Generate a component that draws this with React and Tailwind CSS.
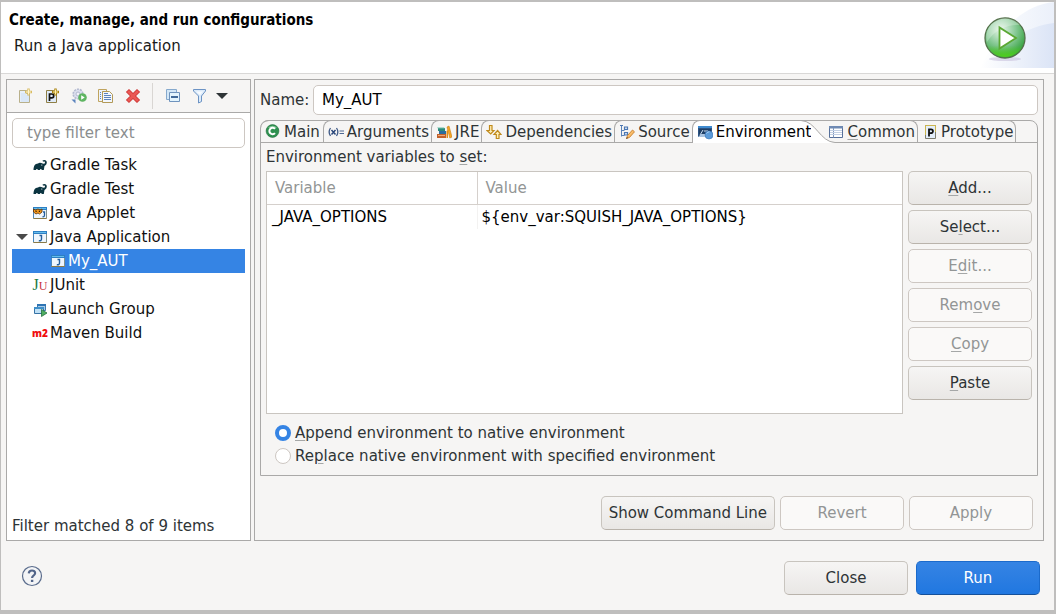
import React, { useState } from "react";

const Svg = ({ size = 16, box = 16, children, className = "" }) => (
    <svg width={size} height={size} viewBox={`0 0 ${box} ${box}`} className={`shrink-0 ${className}`} aria-hidden="true">
        {children}
    </svg>
);

/* ---------- toolbar icons ---------- */

const NewIcon = () => (
    <Svg>
        <path d="M2.5 2.5h7v3h3v9h-10z" fill="#e6effa" stroke="#b9b08a" />
        <path d="M4 5h5v2h3v7H4z" fill="#d9e7f8" />
        <path d="M11.5 .5v7M8 4h7" stroke="#d8bb62" strokeWidth="2.4" />
        <path d="M11.5 1.5v5M9 4h5" stroke="#fff6cf" />
    </Svg>
);

const NewPrototypeIcon = () => (
    <Svg>
        <path d="M2.5 2.5h7v3h3v9h-10z" fill="#dfeaf8" stroke="#8f7f45" />
        <path d="M5.5 13V6h2.300a1.900 1.900 0 0 1 0 3.800H5.500" fill="none" stroke="#111" strokeWidth="1.7" />
        <path d="M11.5 .5v7M8 4h7" stroke="#a67f0c" strokeWidth="2.4" />
        <path d="M11.5 1.5v5M9 4h5" stroke="#fff0a8" />
    </Svg>
);

const ExportIcon = () => (
    <Svg>
        <circle cx="7" cy="6" r="4.800" fill="#dcdfee" stroke="#b3b9cf" strokeWidth="1.6" strokeDasharray="2 1" />
        <circle cx="7" cy="6" r="2" fill="#f1f2f8" stroke="#b3b9cf" />
        <path d="M.5 11.500h4v4L3 14z" fill="#5b84bd" />
        <circle cx="11.500" cy="9.500" r="4.300" fill="#5fb562" />
        <path d="M10.200 7.300v4.400l3.500-2.200z" fill="#fff" />
    </Svg>
);

const DuplicateIcon = () => (
    <Svg>
        <path d="M.5 1.500h8v2h-4v10h-4z" fill="#eef3fb" stroke="#c0a45e" />
        <path d="M4.500 3.500h7l3 3v8h-10z" fill="#f3f7fd" stroke="#b39a58" />
        <path d="M2 4.500h1M2 6.500h1M2 8.500h1M2 10.500h1M6 5.500h4M6 7.500h7M6 9.500h7M6 11.500h7" stroke="#5d83bd" />
    </Svg>
);

const DeleteIcon = () => (
    <Svg>
        <path d="M4 4l8 8M12 4l-8 8" stroke="#c9302e" strokeWidth="4.400" strokeLinecap="square" />
        <path d="M4 4l8 8M12 4l-8 8" stroke="#ea5854" strokeWidth="3" strokeLinecap="square" />
    </Svg>
);

const CollapseIcon = () => (
    <Svg>
        <path d="M1.500 1.500h10v10h-10z" fill="#d3e7f7" stroke="#86a9cd" />
        <path d="M4.500 4.500h10v9h-10z" fill="#e3f4fd" stroke="#6f93bd" />
        <path d="M6 9h7" stroke="#0d3d78" strokeWidth="1.500" />
    </Svg>
);

const FilterIcon = () => (
    <Svg>
        <path d="M1.500 1.500h12v1.500L9.500 8v5.500l-3 1.500V8l-5-5z" fill="#dcebfa" stroke="#6c93c4" />
        <path d="M4 3.500h7L8 7z" fill="#f7fbff" />
    </Svg>
);

/* ---------- tree icons ---------- */

const GradleIcon = () => (
    <Svg>
        <path
            d="M1.500 13c0-4 1.500-6.500 4.500-6.600 1.300-.9 3.300-.6 4.600.2 1.600.5 2.700-.3 2.300-1.700-.3-.7-1.200-.6-1.700-.1l-.8-1c1.400-1.500 4.100-1 4.400 1.200.2 2-1 3.200-2.300 4L11.800 13h-2c-.2-1.500-1.700-1.500-2 0H5.900c-.2-1.500-1.700-1.500-2 0z"
            fill="#0b3440"
        />
        <circle cx="9.800" cy="8" r=".6" fill="#fff" />
    </Svg>
);

const WindowFrame = () => (
    <>
        <path d="M1.500 2.500h13v11h-13z" fill="#eef6fd" stroke="#8a7a48" />
        <path d="M1.500 13V5" stroke="#4b86bb" />
        <path d="M14.500 13V5" stroke="#7f8f8c" />
        <path d="M1 2h14v3H1z" fill="#2c7fc4" />
        <path d="M2 3h12v1H2z" fill="#65bdeb" />
    </>
);

const JavaAppIcon = () => (
    <Svg>
        <WindowFrame />
        <path d="M7.500 6.500h2V10c0 1.600-1.100 2-2.700 1.700" fill="none" stroke="#245f9e" strokeWidth="1.400" />
    </Svg>
);

const JavaAppletIcon = () => (
    <Svg>
        <WindowFrame />
        <path d="M11 7h1.500v3c0 1.500-.8 2-2 1.700" fill="none" stroke="#245f9e" strokeWidth="1.300" />
        <path d="M1.500 4l2 1L6 4l2 1 2-1v3L7.500 9 6 8 4 9 1.500 7z" fill="#f39a1e" stroke="#5a3009" strokeWidth=".8" />
        <path d="M3.500 6.300h1.200M6.800 6.300H8" stroke="#3b1d00" strokeWidth="1.200" />
    </Svg>
);

const JUnitIcon = () => (
    <span aria-hidden="true" className="flex w-4 shrink-0 items-baseline justify-center font-['Liberation_Serif',serif] leading-4">
        <span className="text-[16px] text-[#1c7a45]">J</span>
        <span className="text-[12px] text-[#c8343f]">U</span>
    </span>
);

const LaunchGroupIcon = () => (
    <Svg>
        <path d="M5.500 3.500h8v6h-8z" fill="#a9cdea" stroke="#3d78ab" />
        <path d="M5 3h9v2H5z" fill="#2f74b3" />
        <path d="M2.500 6.500h9v6h-9z" fill="#bfe0f6" stroke="#3572a5" />
        <path d="M2 6h10v2H2z" fill="#3f8fc9" />
        <path d="M9.500 8.500v7l5.500-3.500z" fill="#4fae62" stroke="#27713f" strokeWidth=".8" />
    </Svg>
);

const MavenIcon = () => (
    <span aria-hidden="true" className="w-4 shrink-0 text-center font-['Open_Sans',sans-serif] text-[10px] leading-4 font-extrabold text-[#f00d0d]">
        m2
    </span>
);

/* ---------- tab icons ---------- */

const ClassIcon = () => (
    <Svg>
        <circle cx="7.500" cy="7" r="6.400" fill="#2f9150" stroke="#1f6f3b" strokeWidth=".6" />
        <path d="M3 4a5.500 5.500 0 0 1 9 0z" fill="#7ac290" />
        <path d="M10 4.900a3.200 3.200 0 1 0 0 4.200" fill="none" stroke="#fff" strokeWidth="2" />
    </Svg>
);

const ArgumentsIcon = () => (
    <Svg>
        <path d="M2.500 4c-1.700 2.500-1.700 5.500 0 8M8.500 4c1.700 2.500 1.700 5.500 0 8" fill="none" stroke="#3f5a86" strokeWidth="1.300" />
        <path d="M3.500 6l4 4.500M7.500 6l-4 4.500" stroke="#2a477a" strokeWidth="1.500" />
        <path d="M11.500 7h4.500M11.500 9.500h4.500" stroke="#4d6893" strokeWidth="1.200" />
    </Svg>
);

const LibraryIcon = () => (
    <Svg>
        <path d="M2 4h7v3H2z" fill="#2c8a7b" />
        <path d="M1 3.500h7l1 1H2z" fill="#6dc0a8" />
        <path d="M3 7h7v3H3z" fill="#2b6d9e" />
        <path d="M1 10h9v4H1z" fill="#c2602b" />
        <path d="M2 11h7v1H2z" fill="#efab77" />
        <path d="M11 3l2-1 3 11-2.200 1z" fill="#f5a623" stroke="#c97b10" strokeWidth=".6" />
        <path d="M10.500 14V7l1.500-1v8z" fill="#e08d17" />
    </Svg>
);

const DependenciesIcon = () => (
    <Svg>
        <path d="M3.500 1.500h2.500v5h2L4.700 10 1 6.500h2.500z" fill="#fff0b8" stroke="#c08a1c" strokeWidth="1.200" />
        <path d="M10.300 14.500h2.700v-4h2L11.600 6.500 8 10.500h2.300z" fill="#fff0b8" stroke="#c08a1c" strokeWidth="1.200" />
    </Svg>
);

const SourceIcon = () => (
    <Svg>
        <path d="M2.500 2v10.500M2.500 6.500h3M2.500 11.500h3" fill="none" stroke="#5c83b8" />
        <path d="M1 1.500h3M5.500 3h3v2.500h-3zM5.500 8.500h3V11h-3z" fill="#d7e5f6" stroke="#4c77b2" strokeWidth="1.200" />
        <path d="M7.500 14.500l1-3L13.500 6l2 1.800-5 5.600z" fill="#f9bd6a" stroke="#c77e2c" strokeWidth=".9" />
        <path d="M7 15l1-2 1 1z" fill="#5c4327" />
    </Svg>
);

const EnvironmentIcon = () => (
    <Svg>
        <path d="M1 2h14v11H1z" fill="#2d5483" />
        <path d="M1 2h14v2H1z" fill="#3f8bd0" />
        <path d="M2 5h12v7H2z" fill="#1f3f66" />
        <path d="M3 11l3-5M7 7h4" stroke="#c9dcf0" />
        <path d="M1 13l3-3h6v3z" fill="#a9c3e0" />
        <circle cx="12" cy="11" r="4" fill="#5b9ad8" stroke="#3a76b6" strokeWidth=".6" />
        <path d="M9.500 9.500a3.500 3.500 0 0 1 3-1.800" fill="none" stroke="#aed2f5" />
    </Svg>
);

const CommonIcon = () => (
    <Svg>
        <path d="M1.500 2.500h13v11h-13z" fill="#fff" stroke="#57709a" />
        <path d="M1 2h14v2.500H1z" fill="#6f8ab3" />
        <path d="M5.500 4v9.500" stroke="#7f97bd" />
        <path d="M2 6.500h12M2 8.500h12M2 10.500h12" stroke="#c3d0e4" />
    </Svg>
);

const PrototypeIcon = () => (
    <Svg>
        <path d="M3.500 1.500h10v13h-10z" fill="#e4eefa" stroke="#7d7d6f" />
        <path d="M3.500 11V1.500h10V8" fill="none" stroke="#cdb64e" />
        <path d="M7 12.500V5.300h2a1.900 1.900 0 0 1 0 3.900H7" fill="none" stroke="#111" strokeWidth="1.800" />
    </Svg>
);

const RunBadge = () => (
    <svg width="46" height="46" viewBox="0 0 46 46" className="shrink-0" aria-hidden="true">
        <defs>
            <radialGradient id="ball" cx=".4" cy=".3" r=".75">
                <stop offset="0" stopColor="#e8f5ea" />
                <stop offset=".5" stopColor="#86c995" />
                <stop offset=".85" stopColor="#43a84e" />
                <stop offset="1" stopColor="#2f9a2f" />
            </radialGradient>
            <linearGradient id="glow" x1="0" y1="0" x2="0" y2="1">
                <stop offset=".7" stopColor="#4fd11c" stopOpacity="0" />
                <stop offset="1" stopColor="#4fd11c" />
            </linearGradient>
        </defs>
        <ellipse cx="23" cy="43" rx="16" ry="2" fill="#c9c3dd" opacity=".6" />
        <circle cx="23" cy="22" r="20" fill="url(#ball)" stroke="#53704a" strokeWidth="1.300" />
        <circle cx="23" cy="22" r="19" fill="url(#glow)" />
        <path d="M5 26C12 14 26 8 38 9a19 19 0 0 0-33 17z" fill="#fff" opacity=".25" />
        <path d="M17.500 11.500v21L34 22z" fill="#fff" stroke="#5aa833" strokeWidth="1.800" />
    </svg>
);

const HeaderSwoosh = () => (
    <svg width="74" height="66" viewBox="0 0 74 66" className="absolute top-0 right-0" aria-hidden="true">
        <defs>
            <linearGradient id="sky" x1="0" y1="0" x2="1" y2="0">
                <stop offset="0" stopColor="#fff" />
                <stop offset="1" stopColor="#dbe4f6" />
            </linearGradient>
        </defs>
        <path d="M0 66C18 30 40 4 74 0v66z" fill="url(#sky)" opacity=".55" />
        <path d="M0 66C22 42 46 24 74 21v45z" fill="url(#sky)" />
    </svg>
);

const Caret = ({ color }) => (
    <svg width="12" height="6" viewBox="0 0 12 6" className="shrink-0" aria-hidden="true">
        <path d="M0 0h12L6 6z" fill={color} />
    </svg>
);

/* ---------- data ---------- */

const toolbar = [
    { label: "New launch configuration", Icon: NewIcon },
    { label: "New launch configuration prototype", Icon: NewPrototypeIcon },
    { label: "Export launch configuration", Icon: ExportIcon },
    { label: "Duplicate", Icon: DuplicateIcon },
    { label: "Delete", Icon: DeleteIcon },
];

const tree = [
    { label: "Gradle Task", Icon: GradleIcon },
    { label: "Gradle Test", Icon: GradleIcon },
    { label: "Java Applet", Icon: JavaAppletIcon },
    { label: "Java Application", Icon: JavaAppIcon, open: true },
    { label: "My_AUT", Icon: JavaAppIcon, child: true },
    { label: "JUnit", Icon: JUnitIcon },
    { label: "Launch Group", Icon: LaunchGroupIcon },
    { label: "Maven Build", Icon: MavenIcon },
];

// mnemonic is the index of the underlined letter
const tabs = [
    { label: "Main", Icon: ClassIcon, side: "border-t border-r border-r-transparent rounded-tl-lg" },
    { label: "Arguments", Icon: ArgumentsIcon, side: "border-t border-l rounded-tl-lg" },
    { label: "JRE", Icon: LibraryIcon, side: "border-t border-l rounded-tl-lg" },
    { label: "Dependencies", Icon: DependenciesIcon, side: "border-t border-l rounded-tl-lg" },
    { label: "Source", Icon: SourceIcon, side: "border-t border-l rounded-tl-lg" },
    { label: "Environment", Icon: EnvironmentIcon, side: "border-t border-l rounded-tl-lg", active: true },
    { label: "Common", Icon: CommonIcon, side: "border-t border-r rounded-tr-lg", mnemonic: 0 },
    { label: "Prototype", Icon: PrototypeIcon, side: "border-t border-r rounded-tr-lg" },
];

const actions = [
    { label: "Add...", mnemonic: 0 },
    { label: "Select...", mnemonic: 2 },
    { label: "Edit...", mnemonic: 1, disabled: true },
    { label: "Remove", mnemonic: 3, disabled: true },
    { label: "Copy", mnemonic: 0, disabled: true },
    { label: "Paste", mnemonic: 0 },
];

const Mnemonic = ({ text, at }) => {
    if (at === undefined) return <span>{text}</span>;
    return (
        <span>
            {text.slice(0, at)}
            <u className="decoration-[#a5a7a7] underline-offset-2">{text[at]}</u>
            {text.slice(at + 1)}
        </span>
    );
};

const Button = ({ children, primary, disabled, className = "w-[124px]" }) => {
    let look = "border-[#c8c4be] border-b-[#b9b3ab] bg-linear-to-b from-[#f6f5f4] to-[#e9e7e5] text-[#2e3436]";
    if (primary) look = "border-[#1b6acb] border-b-[#155099] bg-linear-to-b from-[#3584e4] to-[#2077e0] text-white";
    if (disabled) look = "border-[#cdc7c2] bg-[#faf9f8] text-[#929595]";
    return (
        <button type="button" disabled={disabled} className={`h-[34px] rounded-[5px] border whitespace-nowrap ${look} ${className}`}>
            {children}
        </button>
    );
};

const Sidebar = () => (
    <aside className="flex w-[245px] shrink-0 flex-col border border-[#aaa9a8] bg-white">
        <div className="flex h-[33px] items-center border-b border-[#aaa9a8] bg-[#f6f5f4] pl-[10px]">
            <div className="flex gap-[11px]">
                {toolbar.map(({ label, Icon }) => (
                    <button key={label} type="button" aria-label={label}>
                        <Icon />
                    </button>
                ))}
            </div>
            <span className="mr-3 ml-[11px] h-[26px] w-px bg-[#d9d6d3]" />
            <button type="button" aria-label="Collapse all">
                <CollapseIcon />
            </button>
            <button type="button" aria-label="Filter launch configurations" className="ml-[11px] flex items-center gap-2">
                <FilterIcon />
                <Caret color="#2e3436" />
            </button>
        </div>

        <div className="flex flex-1 flex-col px-[5px] pt-[5px] pb-1">
            <input
                type="text"
                aria-label="Filter"
                placeholder="type filter text"
                className="h-[30px] w-full rounded-[5px] border border-[#cdc7c2] bg-white px-[14px] placeholder:text-[#8b8e8f]"
            />
            <ul role="tree" className="mt-[5px] flex-1 text-[#101010]">
                {tree.map(({ label, Icon, open, child }) => (
                    <li
                        key={label}
                        role="treeitem"
                        aria-selected={!!child}
                        className={`flex h-6 items-center gap-[2px] ${child ? "bg-[#3584e4] pl-[38px] text-white" : open ? "pl-1" : "pl-5"}`}
                    >
                        {open && (
                            <span className="w-[14px]">
                                <Caret color="#4a4a4a" />
                            </span>
                        )}
                        <Icon />
                        <span>{label}</span>
                    </li>
                ))}
            </ul>
            <p className="leading-5">Filter matched 8 of 9 items</p>
        </div>
    </aside>
);

const TabBar = () => (
    <div role="tablist" className="flex h-[22px] border-b border-[#aaa9a8]">
        {tabs.map(({ label, Icon, side, active, mnemonic }) => (
            <button
                key={label}
                type="button"
                role="tab"
                aria-selected={!!active}
                className={`relative -mt-px flex h-[22px] items-center gap-[3px] border-[#aaa9a8] ${side} ${
                    active ? "-mb-px h-[23px] bg-white pr-0 pl-1 text-black" : "pr-[2px] pl-1"
                } ${label === "Common" ? "ml-[13px]" : ""}`}
            >
                <Icon />
                <Mnemonic text={label} at={mnemonic} />
                {active && (
                    <svg width="34" height="23" viewBox="0 0 34 23" className="absolute -top-px left-full -ml-[10px]" aria-hidden="true">
                        <path d="M0 0h34v23C20 22 14 2 0 1z" fill="#f6f5f4" />
                        <path d="M10 4C16 9 21 21 34 23H10z" fill="#fff" />
                        <path d="M0 .5h34" stroke="#aaa9a8" />
                        <path d="M0 .5C15 1 19 22 34 22.500" fill="none" stroke="#aaa9a8" />
                    </svg>
                )}
            </button>
        ))}
    </div>
);

const EnvironmentTab = () => {
    const [mode, setMode] = useState("append");

    return (
        <div className="flex flex-1 flex-col px-[5px] pb-2">
            <p className="pt-1 pb-1 leading-5">
                <Mnemonic text="Environment variables to set:" at={25} />
            </p>
            <div className="flex flex-1 gap-[5px]">
                <div className="flex-1 border border-[#c9c5c0] bg-white">
                    <table className="w-full table-fixed border-collapse text-left">
                        <thead>
                            <tr className="h-8 border-b border-[#d5d0cc] text-[#929595]">
                                <th className="w-[210px] border-r border-[#d5d0cc] px-2 font-normal">Variable</th>
                                <th className="px-2 font-normal">Value</th>
                            </tr>
                        </thead>
                        <tbody className="text-black">
                            <tr className="h-6">
                                <td className="border-r border-[#f3f2f1] pl-[5px]">_JAVA_OPTIONS</td>
                                <td className="pl-1">{"${env_var:SQUISH_JAVA_OPTIONS}"}</td>
                            </tr>
                        </tbody>
                    </table>
                </div>
                <div className="flex flex-col gap-[5px]">
                    {actions.map(({ label, mnemonic, disabled }) => (
                        <Button key={label} disabled={disabled}>
                            <Mnemonic text={label} at={mnemonic} />
                        </Button>
                    ))}
                </div>
            </div>

            <div className="mt-[7px] flex flex-col pl-[9px]">
                {[
                    { id: "append", label: "Append environment to native environment", at: 0 },
                    { id: "replace", label: "Replace native environment with specified environment", at: 2 },
                ].map((option) => (
                    <label key={option.id} className="flex h-[23px] items-center gap-1">
                        <input
                            type="radio"
                            name="mode"
                            checked={mode === option.id}
                            onChange={() => setMode(option.id)}
                            className="size-4 appearance-none rounded-full border border-[#cdc7c2] bg-white checked:border-4 checked:border-[#3584e4]"
                        />
                        <Mnemonic text={option.label} at={option.at} />
                    </label>
                ))}
            </div>
        </div>
    );
};

const App = () => {
    return (
        <div className="flex min-h-screen flex-col border-t-2 border-r-2 border-b-4 border-l border-[#bfbebd] bg-[#f6f5f4] font-['DejaVu_Sans',sans-serif] text-[15px] leading-6 text-[#2e3436]">
            <header className="relative flex h-[72px] justify-between border-b border-[#d9d8d7] bg-white text-black">
                <div className="pt-[6px] pl-2">
                    <h1 className="font-['DejaVu_Sans_Condensed','DejaVu_Sans',sans-serif] font-bold">Create, manage, and run configurations</h1>
                    <p className="pt-[2px] pl-[5px] text-[#1a1a1a]">Run a Java application</p>
                </div>
                <HeaderSwoosh />
                <div className="relative pt-[14px] pr-[26px]">
                    <RunBadge />
                </div>
            </header>

            <main className="flex flex-1 gap-[3px] pt-[5px] pr-[10px] pl-[5px]">
                <Sidebar />

                <section className="flex min-w-0 flex-1 flex-col border border-[#aaa9a8] p-[5px] pb-[10px]">
                    <div className="flex items-center gap-1">
                        <label htmlFor="name" className="w-[49px] whitespace-nowrap">Name:</label>
                        <input
                            id="name"
                            type="text"
                            defaultValue="My_AUT"
                            className="h-[30px] min-w-0 flex-1 rounded-[5px] border border-[#cdc7c2] bg-white px-2 text-black"
                        />
                    </div>

                    <div className="mt-[5px] flex flex-1 flex-col rounded-t-lg border border-[#aaa9a8]">
                        <TabBar />
                        <EnvironmentTab />
                    </div>

                    <div className="mt-5 flex justify-end gap-[5px] pr-[5px]">
                        <Button className="px-[7px]">Show Command Line</Button>
                        <Button disabled>Revert</Button>
                        <Button disabled>Apply</Button>
                    </div>
                </section>
            </main>

            <footer className="flex items-start justify-between pt-5 pr-[14px] pb-[15px] pl-5">
                <button type="button" aria-label="Help" className="pt-1">
                    <Svg size={22} box={22}>
                        <circle cx="11" cy="11" r="9.500" fill="#f3f4f6" stroke="#5a6c8c" strokeWidth="1.200" />
                        <path d="M7.800 8.400c.2-4 6.400-3.700 6.300-.2-.1 2.300-3 2.400-3 4.800" fill="none" stroke="#52658a" strokeWidth="2.200" />
                        <path d="M9.900 14.800h2.400V17H9.900z" fill="#52658a" />
                    </Svg>
                </button>
                <div className="flex gap-2">
                    <Button>Close</Button>
                    <Button primary>Run</Button>
                </div>
            </footer>
        </div>
    );
};

export default App;
